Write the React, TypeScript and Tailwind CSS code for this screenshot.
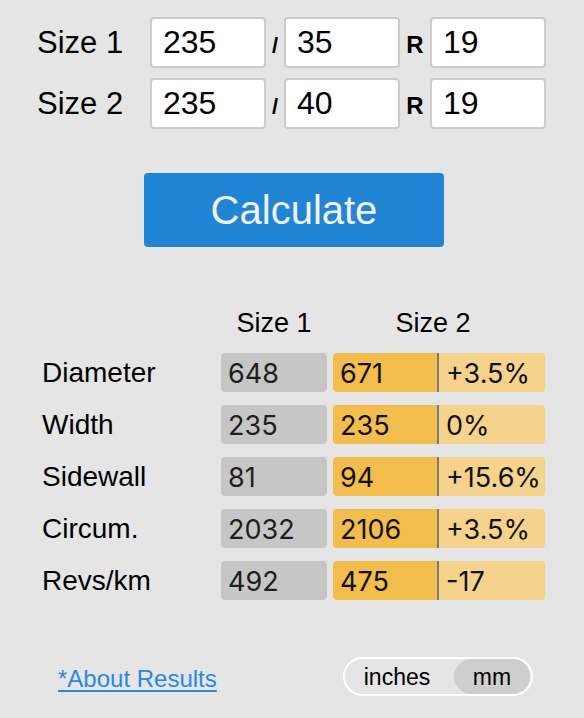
import React from "react";

type Row = { label: string; a: string; b: string; diff: string };

const rows: Row[] = [
  { label: "Diameter", a: "648", b: "671", diff: "+3.5%" },
  { label: "Width", a: "235", b: "235", diff: "0%" },
  { label: "Sidewall", a: "81", b: "94", diff: "+15.6%" },
  { label: "Circum.", a: "2032", b: "2106", diff: "+3.5%" },
  { label: "Revs/km", a: "492", b: "475", diff: "-17" },
];

function SizeInput({ value }: { value: string }) {
  return (
    <input
      defaultValue={value}
      className="w-[116px] h-[51px] border-2 border-[#cbcbcb] rounded-[4px] bg-white pl-[11px] text-[32px] text-black outline-none font-['Liberation_Sans',Arial,sans-serif]"
    />
  );
}

function SizeRow({ label, w, p, r }: { label: string; w: string; p: string; r: string }) {
  return (
    <div className="flex items-baseline">
      <div className="w-[113px] text-[31px] leading-none">{label}</div>
      <SizeInput value={w} />
      <div className="w-[18px] text-center text-[22px] font-bold">/</div>
      <SizeInput value={p} />
      <div className="w-[30px] text-center text-[24px] font-bold">R</div>
      <SizeInput value={r} />
    </div>
  );
}

export default function App() {
  return (
    <div className="w-[584px] h-[718px] bg-[#e5e5e5] text-black font-['Liberation_Sans',Arial,sans-serif] overflow-hidden">
      <div className="pt-[17px] pl-[37px] flex flex-col gap-[10px]">
        <SizeRow label="Size 1" w="235" p="35" r="19" />
        <SizeRow label="Size 2" w="235" p="40" r="19" />
      </div>

      <button className="mt-[44px] ml-[144px] w-[300px] h-[74px] rounded-[4px] bg-[#2185d5] text-[#f2f2f2] text-[40px] leading-none">
        Calculate
      </button>

      <div className="mt-[63px] flex text-[27px] leading-none">
        <div className="w-[221px]" />
        <div className="w-[106px] text-center">Size 1</div>
        <div className="w-[6px]" />
        <div className="w-[200px] text-center">Size 2</div>
      </div>

      <div className="mt-[16px] flex flex-col gap-[13px]">
        {rows.map((r) => (
          <div key={r.label} className="flex items-center h-[39px]">
            <div className="w-[221px] pl-[42px] text-[28px] leading-none">{r.label}</div>
            <div className="w-[106px] h-full rounded-[4px] bg-[#c6c6c6] flex items-center pl-[7px] pt-[3px] text-[27px] text-[#1e1e1e] font-['Inter',sans-serif]">
              {r.a}
            </div>
            <div className="ml-[6px] flex h-full rounded-[4px] overflow-hidden text-[27px] text-[#111] font-['Inter',sans-serif]">
              <div className="w-[106px] bg-[#f3bd4e] border-r-2 border-[#7a7a7a] flex items-center pl-[7px] pt-[3px]">
                {r.b}
              </div>
              <div className="w-[106px] bg-[#f5d38c] flex items-center pl-[7px] pt-[3px]">{r.diff}</div>
            </div>
          </div>
        ))}
      </div>

      <div className="mt-[55px] flex items-center justify-between pl-[58px] pr-[51px]">
        <a href="#" className="text-[24px] text-[#2a89dc] underline underline-offset-[3px] mt-[6px]">
          *About Results
        </a>
        <div className="h-[39px] border-2 border-white rounded-full flex items-center px-[1px] text-[23px]">
          <div className="w-[108px] h-[35px] flex items-center justify-center pr-[6px] pt-[2px]">inches</div>
          <div className="w-[76px] h-[35px] rounded-full bg-[#cecece] flex items-center justify-center pt-[2px]">mm</div>
        </div>
      </div>
    </div>
  );
}
